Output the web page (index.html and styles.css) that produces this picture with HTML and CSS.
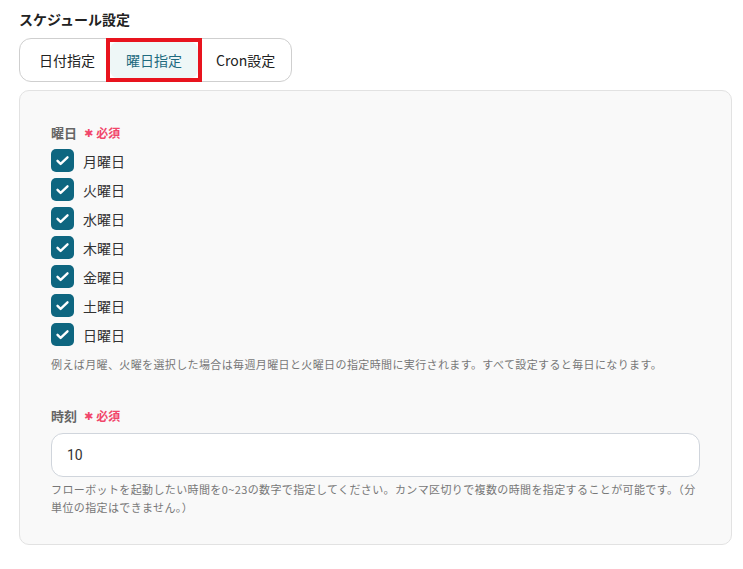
FILE: index.html
```html
<!DOCTYPE html>
<html lang="ja">
<head>
<meta charset="utf-8">
<link rel="stylesheet" href="styles.css">
</head>
<body>
<div class="page">
  <h2 class="title">スケジュール設定</h2>
  <div class="tabs">
    <div class="tab">日付指定</div>
    <div class="tab tab-active">曜日指定<span class="highlight"></span></div>
    <div class="tab">Cron設定</div>
  </div>
  <div class="panel">
    <div class="label">曜日<span class="req"><span class="star">✱</span>必須</span></div>
    <ul class="checks">
      <li class="check"><span class="box"><svg viewBox="0 0 24 24" width="15" height="15"><path d="M4 12.5l5 5L20 7" fill="none" stroke="#fff" stroke-width="3.8" stroke-linecap="round" stroke-linejoin="round"/></svg></span>月曜日</li>
      <li class="check"><span class="box"><svg viewBox="0 0 24 24" width="15" height="15"><path d="M4 12.5l5 5L20 7" fill="none" stroke="#fff" stroke-width="3.8" stroke-linecap="round" stroke-linejoin="round"/></svg></span>火曜日</li>
      <li class="check"><span class="box"><svg viewBox="0 0 24 24" width="15" height="15"><path d="M4 12.5l5 5L20 7" fill="none" stroke="#fff" stroke-width="3.8" stroke-linecap="round" stroke-linejoin="round"/></svg></span>水曜日</li>
      <li class="check"><span class="box"><svg viewBox="0 0 24 24" width="15" height="15"><path d="M4 12.5l5 5L20 7" fill="none" stroke="#fff" stroke-width="3.8" stroke-linecap="round" stroke-linejoin="round"/></svg></span>木曜日</li>
      <li class="check"><span class="box"><svg viewBox="0 0 24 24" width="15" height="15"><path d="M4 12.5l5 5L20 7" fill="none" stroke="#fff" stroke-width="3.8" stroke-linecap="round" stroke-linejoin="round"/></svg></span>金曜日</li>
      <li class="check"><span class="box"><svg viewBox="0 0 24 24" width="15" height="15"><path d="M4 12.5l5 5L20 7" fill="none" stroke="#fff" stroke-width="3.8" stroke-linecap="round" stroke-linejoin="round"/></svg></span>土曜日</li>
      <li class="check"><span class="box"><svg viewBox="0 0 24 24" width="15" height="15"><path d="M4 12.5l5 5L20 7" fill="none" stroke="#fff" stroke-width="3.8" stroke-linecap="round" stroke-linejoin="round"/></svg></span>日曜日</li>
    </ul>
    <p class="help">例えば月曜、火曜を選択した場合は毎週月曜日と火曜日の指定時間に実行されます。すべて設定すると毎日になります。</p>
    <div class="label label-time">時刻<span class="req"><span class="star">✱</span>必須</span></div>
    <div class="input">10</div>
    <p class="help help-time">フローボットを起動したい時間を0~23の数字で指定してください。カンマ区切りで複数の時間を指定することが可能です。（分単位の指定はできません。）</p>
  </div>
</div>
</body>
</html>
```
FILE: styles.css
```css
* { box-sizing: border-box; }
html, body { margin: 0; padding: 0; background: #fff; }
body {
  font-family: "Noto Sans CJK JP", "Noto Sans", sans-serif;
  color: #333;
}
.page {
  padding: 9px 11px 0 19px;
}
.title {
  margin: 0;
  font-size: 14px;
  line-height: 20px;
  font-weight: 700;
  color: #222;
}
.tabs {
  margin-top: 9px;
  display: inline-flex;
  height: 44px;
  border: 1px solid #cfcfcf;
  border-radius: 12px;
  background: #fff;
  padding: 3px;
}
.tab {
  position: relative;
  display: flex;
  align-items: center;
  justify-content: center;
  padding: 0 13px 0 16px;
  font-size: 14px;
  color: #222;
  border-radius: 8px;
}
.tab-active {
  background: #eef7f7;
  color: #1f6b7f;
  padding: 0 16px;
  margin: 0 2px 0 2px;
}
.highlight {
  position: absolute;
  left: -4px;
  right: -4px;
  top: -4px;
  bottom: -4px;
  border: 4px solid #e8141e;
  pointer-events: none;
}
.panel {
  margin-top: 8px;
  background: #f9f9f9;
  border: 1px solid #e2e2e2;
  border-radius: 10px;
  padding: 31px 31px 28px 31px;
}
.label {
  display: flex;
  align-items: center;
  height: 20px;
  font-size: 13px;
  font-weight: 700;
  color: #666;
}
.req {
  display: inline-flex;
  align-items: center;
  margin-left: 7px;
  color: #f1466a;
  font-size: 12px;
  font-weight: 700;
}
.star {
  font-family: "DejaVu Sans", sans-serif;
  font-size: 11px;
  margin-right: 3px;
  position: relative;
  top: 1px;
}
.checks {
  list-style: none;
  margin: 4px 0 0 0;
  padding: 0;
}
.check {
  display: flex;
  align-items: center;
  height: 29px;
  font-size: 14px;
  color: #333;
}
.box {
  width: 23px;
  height: 23px;
  border-radius: 5px;
  background: #0e6680;
  display: flex;
  align-items: center;
  justify-content: center;
  margin-right: 9px;
}
.help {
  margin: 6px 0 0 0;
  font-size: 11px;
  line-height: 18px;
  color: #777;
  letter-spacing: 0.38px;
}
.label-time {
  margin-top: 32px;
}
.input {
  margin-top: 8px;
  height: 44px;
  border: 1px solid #d0d5dc;
  border-radius: 12px;
  background: #fff;
  display: flex;
  align-items: center;
  padding-left: 15px;
  font-size: 14px;
  color: #333;
  font-family: "Roboto", "Noto Sans", sans-serif;
}
.help-time {
  margin-top: 3px;
}
```
